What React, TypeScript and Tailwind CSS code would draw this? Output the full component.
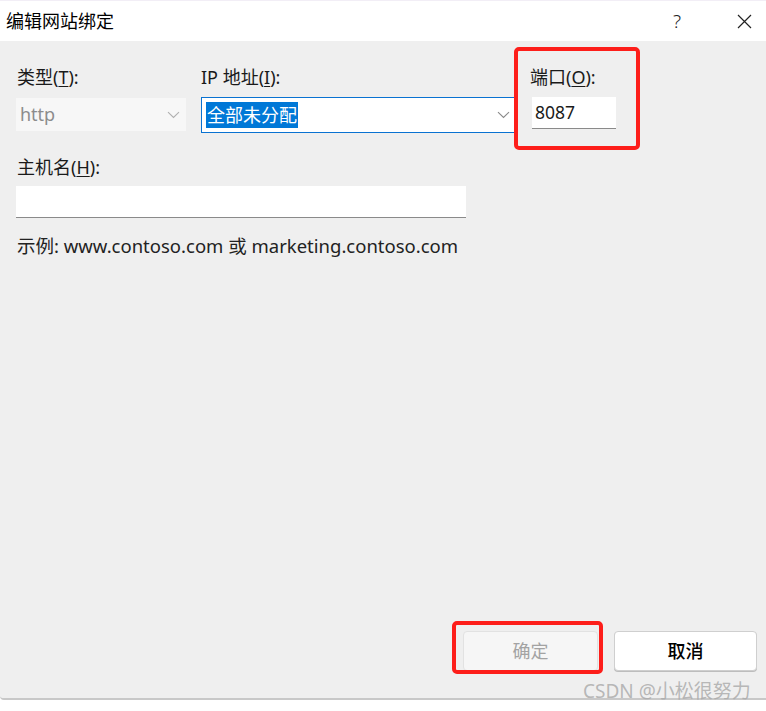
import React from "react";

const font = { fontFamily: '"Noto Sans", "Noto Sans CJK SC", sans-serif' };

function Chevron({ color = "#8a8a8a" }: { color?: string }) {
  return (
    <svg width="13" height="8" viewBox="0 0 13 8" fill="none">
      <path d="M1 1.2 L6.5 6.5 L12 1.2" stroke={color} strokeWidth="1.1" />
    </svg>
  );
}

export default function App() {
  return (
    <div className="relative flex h-[711px] w-[766px] flex-col overflow-hidden bg-white text-[#1a1a1a]" style={font}>
      {/* title bar */}
      <div className="flex h-[41px] items-center border-t border-[#f2eef6] bg-white pl-[6px]">
        <span className="text-[18px] leading-none text-black">编辑网站绑定</span>
        <span className="ml-auto mr-[56px] text-[19px] font-light leading-none text-[#222]">?</span>
        <svg className="mr-[14px]" width="15" height="15" viewBox="0 0 15 15">
          <path d="M1 1 L14 14 M14 1 L1 14" stroke="#222" strokeWidth="1.2" />
        </svg>
      </div>

      {/* body */}
      <div className="flex flex-1 flex-col rounded-bl-[4px] border-b-2 border-[#c8c8c8] bg-[#efefef] pl-[16px] pt-[24px]">
        <div className="flex items-start">
          <div className="flex w-[170px] flex-col">
            <label className="pl-[1px] text-[18px] leading-[24px]">
              类型(<span className="underline underline-offset-2">T</span>):
            </label>
            <div className="mt-[9px] flex h-[33px] items-center justify-between bg-[#f7f7f7] pl-[4px] pr-[6px]">
              <span className="text-[18px] text-[#8c8c8c]">http</span>
              <Chevron color="#b0b0b0" />
            </div>
          </div>

          <div className="ml-[15px] flex w-[316px] flex-col">
            <label className="text-[18px] leading-[24px]">
              IP 地址(<span className="underline underline-offset-2">I</span>):
            </label>
            <div className="mt-[8px] flex h-[36px] items-center justify-between border border-[#0a72d1] bg-white pl-[4px] pr-[6px]">
              <span className="bg-[#0078d7] px-[1px] text-[18px] leading-[26px] text-white">全部未分配</span>
              <Chevron />
            </div>
          </div>

          <div className="ml-[13px] flex flex-col">
            <label className="text-[18px] leading-[24px]">
              端口(<span className="underline underline-offset-2">O</span>):
            </label>
            <div className="ml-[2px] mt-[8px] flex h-[32px] w-[84px] items-center border-b-[1.5px] border-[#8a8a8a] bg-white pl-[3px]">
              <span className="text-[17.5px]">8087</span>
            </div>
          </div>
        </div>

        <label className="mt-[22px] pl-[1px] text-[18px] leading-[24px]">
          主机名(<span className="underline underline-offset-2">H</span>):
        </label>
        <div className="mt-[7px] h-[32px] w-[450px] border-b-[1.5px] border-[#8a8a8a] bg-white" />
        <div className="mt-[16px] pl-[1px] text-[18.5px] leading-[24px] text-[#222]">
          示例: www.contoso.com 或 marketing.contoso.com
        </div>

        <div className="mt-auto flex justify-end gap-[16px] pb-[27px] pr-[9px]">
          <button className="h-[40px] w-[135px] rounded-[4px] border border-[#e2e2e2] bg-[#f6f6f6] text-[18px] text-[#a3a3a3]">
            确定
          </button>
          <button className="h-[40px] w-[143px] rounded-[4px] border border-[#cfcfcf] bg-white text-[18px] font-medium text-black shadow-[0_1px_0_#bdbdbd]">
            取消
          </button>
        </div>
      </div>
      <div className="h-[11px] bg-white" />

      {/* annotation boxes */}
      <div className="pointer-events-none absolute left-[514px] top-[47px] h-[103px] w-[126px] rounded-[5px] border-[4px] border-[#fd1e1a]" />
      <div className="pointer-events-none absolute left-[452px] top-[621px] h-[53px] w-[151px] rounded-[5px] border-[4px] border-[#fd1e1a]" />

      <div className="pointer-events-none absolute left-[583px] top-[679px] text-[19px] leading-[24px] text-[#a8a8a8]/80">
        CSDN @小松很努力
      </div>
    </div>
  );
}
